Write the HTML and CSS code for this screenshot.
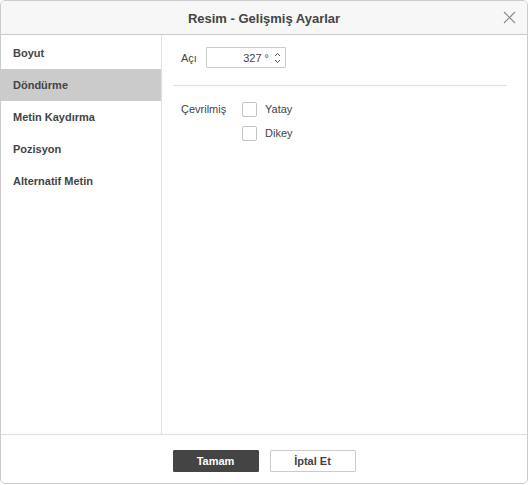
FILE: index.html
```html
<!DOCTYPE html>
<html lang="tr">
<head>
<meta charset="utf-8">
<title>Resim - Gelişmiş Ayarlar</title>
<link rel="stylesheet" href="styles.css">
</head>
<body>
<div class="dialog">
  <div class="header">
    <span class="title">Resim - Gelişmiş Ayarlar</span>
    <span class="close" aria-label="Kapat">
      <svg width="13" height="13" viewBox="0 0 13 13"><path d="M1 1L12 12M12 1L1 12" stroke="#8a8a8a" stroke-width="1.1" fill="none"/></svg>
    </span>
  </div>
  <div class="body">
    <ul class="sidebar">
      <li class="item">Boyut</li>
      <li class="item selected">Döndürme</li>
      <li class="item">Metin Kaydırma</li>
      <li class="item">Pozisyon</li>
      <li class="item">Alternatif Metin</li>
    </ul>
    <div class="content">
      <div class="row angle-row">
        <span class="label">Açı</span>
        <div class="spin">
          <span class="value">327 °</span>
          <span class="arrows">
            <svg width="7" height="5" viewBox="0 0 7 5"><path d="M1 4L3.5 1.5L6 4" stroke="#555" stroke-width="1" fill="none"/></svg>
            <svg width="7" height="5" viewBox="0 0 7 5"><path d="M1 1L3.5 3.5L6 1" stroke="#555" stroke-width="1" fill="none"/></svg>
          </span>
        </div>
      </div>
      <div class="separator"></div>
      <div class="flip">
        <span class="label flip-label">Çevrilmiş</span>
        <div class="checks">
          <label class="check"><span class="box"></span><span>Yatay</span></label>
          <label class="check"><span class="box"></span><span>Dikey</span></label>
        </div>
      </div>
    </div>
  </div>
  <div class="footer">
    <button class="btn primary">Tamam</button>
    <button class="btn">İptal Et</button>
  </div>
</div>
</body>
</html>
```

FILE: styles.css
```css
* { box-sizing: border-box; }
html, body { margin: 0; padding: 0; background: #fff; }
body {
  font-family: "Liberation Sans", Arial, sans-serif;
  color: #444;
  font-size: 11px;
}
.dialog {
  width: 528px;
  height: 484px;
  border: 1px solid #cbcbcb;
  border-radius: 5px;
  display: flex;
  flex-direction: column;
  overflow: hidden;
  background: #fff;
}
.header {
  height: 34px;
  flex: none;
  background: #f7f7f7;
  border-bottom: 1px solid #cbcbcb;
  display: flex;
  align-items: center;
  justify-content: center;
  position: relative;
}
.title {
  font-size: 13px;
  font-weight: bold;
  color: #444;
  padding-top: 1px;
}
.close {
  position: absolute;
  right: 11px;
  top: 10px;
  width: 13px;
  height: 13px;
  display: flex;
}
.body {
  flex: 1;
  display: flex;
  min-height: 0;
}
.sidebar {
  list-style: none;
  margin: 0;
  padding: 2px 0 0 0;
  width: 161px;
  flex: none;
  border-right: 1px solid #dfdfdf;
}
.item {
  height: 32px;
  line-height: 32px;
  padding-left: 12px;
  font-weight: bold;
  color: #444;
  font-size: 11px;
}
.item.selected { background: #cbcbcb; }
.content {
  flex: 1;
  padding: 12px 20px 0 11px;
}
.row { display: flex; align-items: center; }
.angle-row { padding-left: 8px; }
.label { color: #444; font-size: 11px; }
.angle-row .label { width: 25px; }
.spin {
  width: 80px;
  height: 21px;
  border: 1px solid #cbcbcb;
  border-radius: 1px;
  display: flex;
  align-items: center;
  justify-content: flex-end;
  padding-right: 4px;
}
.value { font-size: 11px; color: #444; margin-right: 5px; }
.arrows {
  display: flex;
  flex-direction: column;
  gap: 2px;
}
.arrows svg { display: block; }
.separator {
  height: 1px;
  background: #dfdfdf;
  margin: 17px 0 16px 0;
}
.flip {
  display: flex;
  padding-left: 8px;
}
.flip-label {
  width: 61px;
  line-height: 15px;
}
.checks { display: flex; flex-direction: column; gap: 9px; }
.check { display: flex; align-items: center; color: #444; line-height: 15px; }
.box {
  width: 15px;
  height: 15px;
  border: 1px solid #c4c4c4;
  border-radius: 2px;
  background: #fff;
  margin-right: 8px;
}
.footer {
  height: 49px;
  flex: none;
  border-top: 1px solid #dfdfdf;
  display: flex;
  justify-content: center;
  align-items: flex-start;
  gap: 11px;
  padding-top: 15px;
}
.btn {
  width: 86px;
  height: 22px;
  border: 1px solid #cbcbcb;
  border-radius: 1px;
  background: #fff;
  font-family: "Liberation Sans", Arial, sans-serif;
  font-size: 11px;
  font-weight: bold;
  color: #444;
  padding: 0;
}
.btn.primary {
  background: #444;
  border-color: #444;
  color: #fff;
}
```
